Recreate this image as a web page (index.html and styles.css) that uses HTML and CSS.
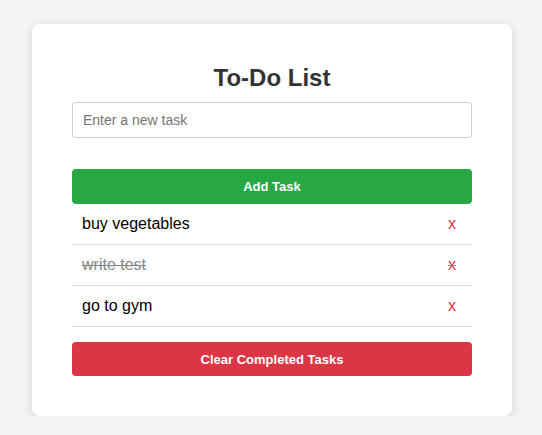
FILE: index.html
```html
<!DOCTYPE html>
<html lang="en">
<head>
<meta charset="utf-8">
<title>To-Do List</title>
<link rel="stylesheet" href="styles.css">
</head>
<body>
<div class="card">
  <h2 class="title">To-Do List</h2>
  <input class="task-input" type="text" placeholder="Enter a new task">
  <button class="btn btn-add">Add Task</button>
  <ul class="task-list">
    <li class="task"><span class="task-text">buy vegetables</span><span class="delete">x</span></li>
    <li class="task completed"><span class="task-text">write test</span><span class="delete">x</span></li>
    <li class="task"><span class="task-text">go to gym</span><span class="delete">x</span></li>
  </ul>
  <button class="btn btn-clear">Clear Completed Tasks</button>
</div>
</body>
</html>
```
FILE: styles.css
```css
html, body {
  margin: 0;
  padding: 0;
}
body {
  background: #f4f4f4;
  font-family: "Liberation Sans", Arial, sans-serif;
  display: flex;
  justify-content: center;
  align-items: flex-start;
  padding: 24px 0 0 2px;
}
.card {
  width: 400px;
  padding: 40px;
  background: #fff;
  border-radius: 8px;
  box-shadow: 0 2px 10px rgba(0, 0, 0, 0.15);
  display: flex;
  flex-direction: column;
}
.title {
  margin: 0 0 10px;
  font-size: 24px;
  line-height: 28px;
  text-align: center;
  color: #333;
}
.task-input {
  box-sizing: border-box;
  width: 100%;
  height: 36px;
  padding: 0 10px;
  border: 1px solid #ccc;
  border-radius: 4px;
  font-family: "Liberation Sans", Arial, sans-serif;
  font-size: 14px;
  color: #333;
}
.task-input::placeholder {
  color: #757575;
}
.btn {
  height: 35px;
  border: none;
  border-radius: 4px;
  color: #fff;
  font-family: "Liberation Sans", Arial, sans-serif;
  font-size: 13px;
  font-weight: bold;
}
.btn-add {
  margin-top: 31px;
  background: #28a745;
}
.btn-clear {
  height: 34px;
  margin-top: 15px;
  background: #dc3545;
}
.task-list {
  list-style: none;
  margin: 0;
  padding: 0;
}
.task {
  display: flex;
  justify-content: space-between;
  align-items: center;
  padding: 10px 16px 10px 10px;
  border-bottom: 1px solid #ddd;
  font-size: 16px;
  line-height: 20px;
  color: #000;
}
.task.completed {
  text-decoration: line-through;
  color: #888;
}
.delete {
  color: #dc3545;
}
```
